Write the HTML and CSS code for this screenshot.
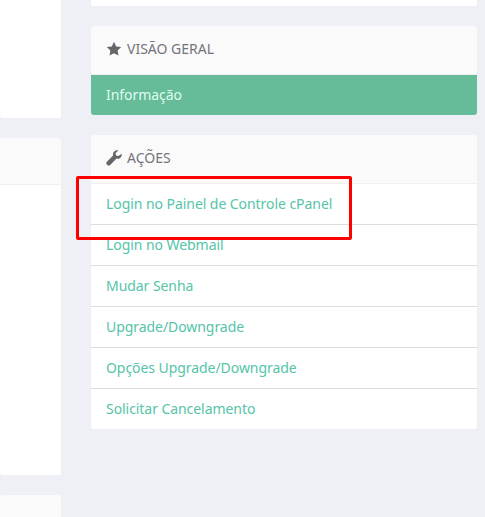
FILE: index.html
```html
<!DOCTYPE html>
<html lang="pt-BR">
<head>
    <meta charset="UTF-8">
    <meta name="viewport" content="width=device-width, initial-scale=1.0">
    <title>Detalhes do Produto</title>
    <link rel="stylesheet" href="styles.css">
</head>
<body>
    <div class="layout">
        <div class="main-col">
            <div class="panel panel-top"></div>
            <div class="panel panel-details">
                <div class="panel-heading panel-heading-empty"></div>
                <div class="panel-body"></div>
            </div>
            <div class="panel panel-bottom"></div>
        </div>
        <div class="side-col">
            <div class="panel panel-stub"></div>
            <div class="panel">
                <div class="panel-heading">
                    <svg class="icon" viewBox="0 0 16 16"><path d="M8 .8l2.200 4.600 5 .7-3.600 3.500.9 5L8 12.200l-4.500 2.400.9-5L.8 6.100l5-.7z"/></svg>
                    <span>VISÃO GERAL</span>
                </div>
                <a class="menu-item active" href="#">Informação</a>
            </div>
            <div class="panel">
                <div class="panel-heading">
                    <svg class="icon" viewBox="0 0 16 16"><path d="M15.600 3.700c.3 1.500-.1 3-1.200 4-1.100 1.100-2.700 1.400-4.100 1L4.200 15c-.8.800-2.100.8-2.900 0l-.4-.4c-.8-.8-.8-2.100 0-2.900l6.200-6.100c-.4-1.400-.1-3 1-4.100C9.200.4 10.800 0 12.300.4L9.500 3.200l.5 2.400 2.400.5z"/></svg>
                    <span>AÇÕES</span>
                </div>
                <a class="menu-item" href="#">Login no Painel de Controle cPanel</a>
                <a class="menu-item" href="#">Login no Webmail</a>
                <a class="menu-item" href="#">Mudar Senha</a>
                <a class="menu-item" href="#">Upgrade/Downgrade</a>
                <a class="menu-item" href="#">Opções Upgrade/Downgrade</a>
                <a class="menu-item" href="#">Solicitar Cancelamento</a>
            </div>
        </div>
    </div>
    <div class="highlight"></div>
</body>
</html>
```

FILE: styles.css
```css
html, body {
    height: 100%;
}
body {
    margin: 0;
    background: #eff0f6;
    font-family: "Noto Sans", sans-serif;
    font-size: 14px;
    overflow: hidden;
    position: relative;
}
.layout {
    display: grid;
    grid-template-columns: 61px 386px;
    column-gap: 30px;
    height: 517px;
    overflow: hidden;
}
.main-col, .side-col {
    display: flex;
    flex-direction: column;
    gap: 20px;
}
.panel {
    background: #fff;
    border-radius: 3px;
    overflow: hidden;
}
.panel-top {
    height: 138px;
    margin-top: -20px;
}
.panel-details {
    height: 337px;
}
.panel-bottom {
    height: 22px;
    background: #fafafa;
    border-radius: 3px 3px 0 0;
}
.panel-stub {
    height: 26px;
    margin-top: -20px;
}
.panel-heading {
    box-sizing: border-box;
    height: 49px;
    padding: 0 0 3px 15px;
    background: #fafafa;
    border-bottom: 1px solid #f0f0f0;
    display: flex;
    align-items: center;
    gap: 5px;
    color: #74747c;
    font-size: 14px;
}
.panel-heading-empty {
    height: 47px;
    padding: 0;
}
.icon {
    width: 16px;
    height: 16px;
    fill: #666;
}
.menu-item {
    display: block;
    height: 40px;
    line-height: 40px;
    padding-left: 15px;
    color: #55c4a8;
    letter-spacing: -0.06px;
    text-decoration: none;
    border-top: 1px solid #ddd;
}
.panel-heading + .menu-item {
    border-top: 0;
}
.menu-item.active {
    background: #66bc99;
    color: #dffbf1;
}
.highlight {
    position: absolute;
    left: 76px;
    top: 176px;
    width: 270px;
    height: 58px;
    border: 3px solid #f00;
    border-radius: 2px;
}
```
